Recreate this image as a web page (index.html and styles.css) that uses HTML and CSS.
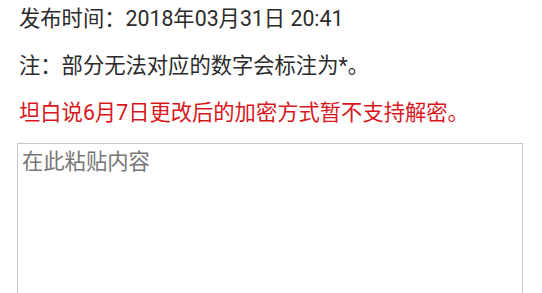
FILE: index.html
```html
<!DOCTYPE html>
<html lang="zh-CN">
<head>
  <meta charset="UTF-8">
  <meta name="viewport" content="width=device-width, initial-scale=1.0">
  <title>解密工具</title>
  <link rel="stylesheet" href="styles.css">
</head>
<body>
  <p class="info">发布时间：2018年03月31日 20:41</p>
  <p class="info">注：部分无法对应的数字会标注为*。</p>
  <p class="info warn">坦白说6月7日更改后的加密方式暂不支持解密。</p>
  <textarea class="paste" name="content" placeholder="在此粘贴内容"></textarea>
</body>
</html>
```

FILE: styles.css
```css
body {
  margin: 0;
  padding: 4px 19px 0;
  font-family: Roboto, "Noto Sans CJK SC", sans-serif;
  font-size: 21.3px;
  color: #2b2b2b;
  background-color: #fff;
}

.info {
  margin: 0 0 18px;
  line-height: 29px;
}

.warn {
  color: #d9161c;
  margin-bottom: 16px;
}

.paste {
  display: block;
  box-sizing: border-box;
  width: 506px;
  height: 200px;
  margin-left: -2px;
  padding: 3px 4px;
  border: 1px solid #c8c8c8;
  font-family: Roboto, "Noto Sans CJK SC", sans-serif;
  font-size: 21.3px;
  line-height: 29px;
  color: #2b2b2b;
  resize: vertical;
}

.paste::placeholder {
  color: #767676;
}
```
